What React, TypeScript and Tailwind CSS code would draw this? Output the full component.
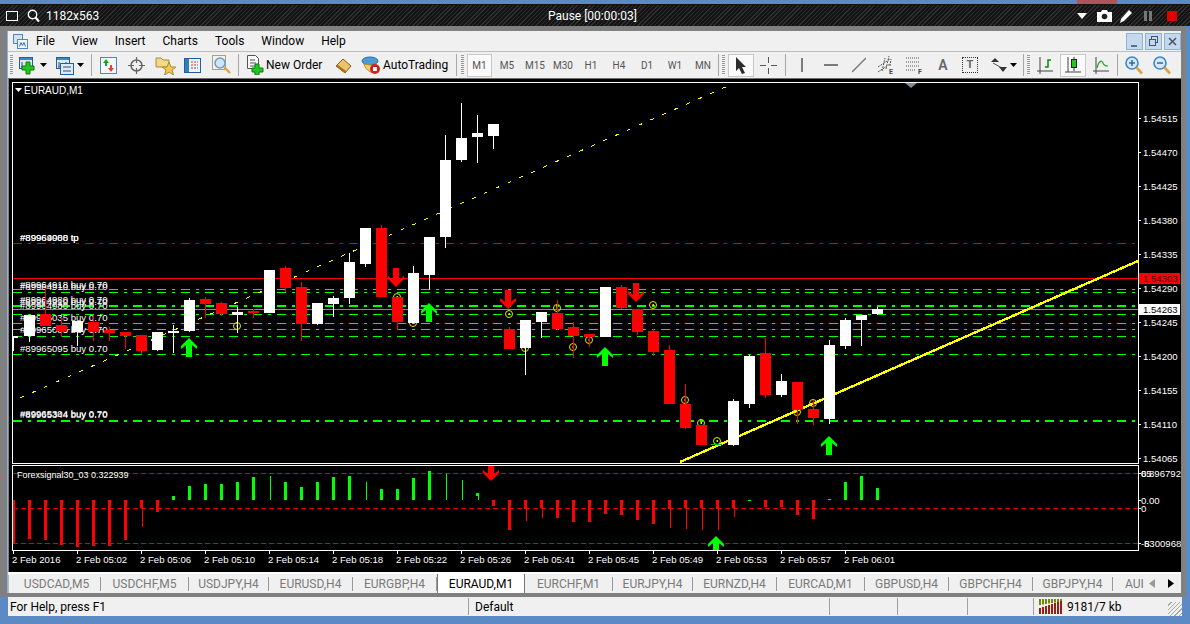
import React from "react";

// [x, bodyTop, bodyBottom, wickTop, wickBottom]
const whiteCandles = [
  [29, 315, 336, 315, 342], [77, 321, 332, 321, 346], [157, 332, 350, 332, 351], [173, 331, 333, 325, 353],
  [189, 300, 331, 298, 332], [237, 312, 315, 307, 333], [269, 270, 313, 270, 313], [317, 303, 324, 303, 325],
  [333, 298, 304, 296, 317], [349, 262, 298, 253, 304], [365, 228, 264, 228, 267], [413, 273, 323, 266, 323],
  [429, 237, 275, 237, 290], [445, 160, 237, 135, 248], [461, 138, 160, 103, 162], [477, 133, 137, 115, 163],
  [493, 124, 136, 124, 149], [525, 320, 348, 320, 375], [541, 312, 322, 312, 338], [605, 287, 337, 287, 337],
  [733, 401, 445, 399, 446], [749, 356, 404, 355, 408], [781, 381, 395, 374, 397], [829, 345, 419, 340, 424],
  [845, 320, 346, 318, 349], [861, 315, 320, 315, 346], [877, 309, 314, 307, 315],
];
const redCandles = [
  [45, 314, 326, 288, 326], [61, 325, 331, 317, 337], [93, 322, 332, 315, 341], [109, 330, 333, 327, 341],
  [125, 332, 336, 332, 349], [141, 335, 351, 335, 354], [205, 299, 304, 297, 318], [221, 303, 314, 302, 316],
  [253, 311, 313, 309, 318], [285, 268, 288, 266, 292], [301, 287, 324, 282, 341], [381, 228, 297, 225, 297],
  [397, 297, 322, 297, 330], [509, 329, 349, 327, 349], [557, 313, 329, 300, 330], [573, 327, 336, 322, 358],
  [589, 334, 337, 334, 347], [621, 287, 308, 285, 309], [637, 309, 332, 309, 335], [653, 331, 352, 329, 356],
  [669, 350, 404, 345, 404], [685, 404, 428, 384, 429], [701, 425, 445, 425, 445], [765, 353, 395, 338, 398],
  [797, 382, 410, 382, 424], [813, 409, 418, 400, 425],
];
const circles = [[237, 326], [397, 297], [413, 323], [509, 314], [525, 348], [557, 308], [573, 347], [589, 340], [653, 305], [685, 400], [701, 423], [717, 441], [797, 412], [813, 403]];
const greenDashed = [289, 292, 305, 306, 314, 323, 329, 336, 354, 420, 421];
const priceLabels: [number, string][] = [[118, "1.54515"], [152, "1.54470"], [186, "1.54425"], [220, "1.54380"], [254, "1.54335"], [288, "1.54290"], [322, "1.54245"], [356, "1.54200"], [390, "1.54155"], [424, "1.54110"], [458, "1.54065"]];
const timeLabels = ["2 Feb 2016", "2 Feb 05:02", "2 Feb 05:06", "2 Feb 05:10", "2 Feb 05:14", "2 Feb 05:18", "2 Feb 05:22", "2 Feb 05:26", "2 Feb 05:41", "2 Feb 05:45", "2 Feb 05:49", "2 Feb 05:53", "2 Feb 05:57", "2 Feb 06:01"];
const orderLabels: [number, string][] = [
  [241, "#89969088 tp"], [241, "#89964900 tp"], [288, "#89964918 buy 0.70"], [290, "#89964910 buy 0.70"],
  [303, "#89964980 buy 0.70"], [305, "#89964910 buy 0.70"], [309, "#89964980 buy 0.70"], [321, "#89965035 buy 0.70"],
  [333, "#89965085 buy 0.70"], [352, "#89965095 buy 0.70"], [417, "#89965304 buy 0.70"], [418, "#89965344 buy 0.70"],
];
// [x, end y, thin end y or 0]
const redBars = [
  [13, 543, 0], [29, 539, 0], [45, 540, 0], [61, 545, 0], [77, 547, 0], [93, 546, 0], [109, 546, 0], [125, 540, 0],
  [141, 508, 527], [157, 512, 0], [493, 506, 0], [509, 530, 0], [525, 509, 521], [541, 508, 518], [557, 518, 0],
  [573, 522, 0], [589, 522, 0], [605, 514, 0], [621, 515, 0], [637, 520, 0], [653, 524, 0], [669, 509, 528],
  [685, 508, 529], [701, 508, 530], [717, 509, 530], [733, 508, 517], [765, 507, 0], [781, 507, 0], [797, 515, 0], [813, 519, 0],
];
// [x, top y, thin]
const greenBars = [
  [173, 496, 0], [189, 486, 0], [205, 484, 0], [221, 484, 0], [237, 482, 0], [253, 477, 0], [269, 476, 1], [285, 482, 0],
  [301, 487, 0], [317, 482, 0], [333, 477, 0], [349, 476, 0], [365, 482, 1], [381, 489, 0], [397, 489, 0], [413, 478, 0],
  [429, 471, 0], [445, 474, 1], [461, 480, 1], [845, 482, 0], [861, 476, 0], [877, 488, 0],
];

const tabs = [
  { name: "USDCAD,M5", w: "w-[91px] pl-[3px]" }, { name: "USDCHF,M5", w: "w-[88px]" }, { name: "USDJPY,H4", w: "w-[80px]" },
  { name: "EURUSD,H4", w: "w-[84px]" }, { name: "EURGBP,H4", w: "w-[84px]" }, { name: "EURAUD,M1", w: "w-[88px]", active: true },
  { name: "EURCHF,M1", w: "w-[88px]" }, { name: "EURJPY,H4", w: "w-[80px]" }, { name: "EURNZD,H4", w: "w-[84px]" },
  { name: "EURCAD,M1", w: "w-[88px]" }, { name: "GBPUSD,H4", w: "w-[84px]" }, { name: "GBPCHF,H4", w: "w-[84px]" },
  { name: "GBPJPY,H4", w: "w-[80px]" },
];

function UpArrow({ x, y }: { x: number; y: number }) {
  return <polygon fill="#00ff00" transform={`translate(${x} ${y})`} points="0,0 8,8 8,11 3,7 3,19 -3,19 -3,7 -8,11 -8,8" />;
}
function DownArrow({ x, y }: { x: number; y: number }) {
  return <polygon fill="#ff0000" transform={`translate(${x} ${y})`} points="0,0 8,-8 8,-11 3,-7 3,-19 -3,-19 -3,-7 -8,-11 -8,-8" />;
}

function Chart() {
  return (
    <svg viewBox="9 79 1172 493" className="ml-px w-[1172px] h-[493px] block bg-black font-['Liberation_Sans',sans-serif] text-[9.6px]">
      <defs>
        <clipPath id="main"><rect x="13" y="83" width="1125" height="380" /></clipPath>
        <clipPath id="ind"><rect x="13" y="466" width="1125" height="84" /></clipPath>
      </defs>
      <g clipPath="url(#main)">
        <g shapeRendering="crispEdges">
          <line x1="13" x2="1138" y1="243.5" y2="243.5" stroke="#e00000" strokeDasharray="9 6 3 6" />
          {greenDashed.map((y) => (
            <line key={y} x1="13" x2="1138" y1={y + 0.5} y2={y + 0.5} stroke="#00ff00" strokeDasharray="9 6 3 6" />
          ))}
          <line x1="13" x2="1138" y1="278.5" y2="278.5" stroke="#ff0000" />
          <line x1="13" x2="1138" y1="309.5" y2="309.5" stroke="#8a8a8a" />
          <line x1="20" y1="398" x2="730" y2="85" stroke="#ffff00" strokeDasharray="4 9" />
          <line x1="680" y1="462" x2="1138" y2="261" stroke="#ffff00" strokeWidth="2.4" />
        </g>
        {circles.map(([x, y]) => (
          <g key={x}>
            <circle cx={x} cy={y} r="3.5" fill="none" stroke="#e8e800" />
            <rect x={x - 0.5} y={y - 1} width="1.5" height="2" fill="#e8e800" />
          </g>
        ))}
        <rect x="711" y="444" width="11" height="1" fill="#00c000" />
        {orderLabels.map(([y, t], i) => (
          <text key={i} x="20" y={y} fill="#fff">{t}</text>
        ))}
        <g shapeRendering="crispEdges">
          <rect x="13" y="336" width="5" height="2" fill="#fff" />
          <rect x="13" y="336" width="1" height="15" fill="#fff" />
          {whiteCandles.map(([x, t, b, wt, wb]) => (
            <g key={x} fill="#fff">
              <rect x={x} y={wt} width="1" height={wb - wt} />
              <rect x={x - 5} y={t} width="11" height={b - t} />
            </g>
          ))}
          {redCandles.map(([x, t, b, wt, wb]) => (
            <g key={x} fill="#ff0000">
              <rect x={x} y={wt} width="1" height={wb - wt} />
              <rect x={x - 5} y={t} width="11" height={b - t} />
            </g>
          ))}
        </g>
        <DownArrow x={396} y={287} />
        <DownArrow x={508} y={309} />
        <DownArrow x={636} y={302} />
        <UpArrow x={189} y={338} />
        <UpArrow x={429} y={303} />
        <UpArrow x={605} y={347} />
        <UpArrow x={829} y={436} />
      </g>

      <polygon points="905,83 917,83 911,88" fill="#7b8a9c" />
      <polygon points="15,88 22,88 18.5,92" fill="#fff" />
      <text x="24" y="94" fill="#fff" fontSize="10">EURAUD,M1</text>
      <rect x="12.5" y="82.5" width="1125.5" height="381" fill="none" stroke="#fff" shapeRendering="crispEdges" />

      <g clipPath="url(#ind)">
        <g shapeRendering="crispEdges">
          {[473, 508, 543].map((y) => (
            <line key={y} x1="13" x2="1138" y1={y + 0.5} y2={y + 0.5} stroke="#e00000" strokeDasharray="5 3" />
          ))}
          {redBars.map(([x, end, thin]) => (
            <g key={x} fill="#ff0000">
              <rect x={x - 1} y="500" width="3" height={end - 500} />
              {thin > 0 && <rect x={x + 1} y="500" width="1" height={thin - 500} />}
            </g>
          ))}
          {greenBars.map(([x, top, thin]) => (
            <rect key={x} x={thin ? x + 1 : x - 1} y={top} width={thin ? 1 : 3} height={500 - top} fill="#00ff00" />
          ))}
          <rect x="476" y="493" width="3" height="3" fill="#00ff00" />
          <rect x="478" y="493" width="1" height="7" fill="#00ff00" />
          <rect x="748" y="500" width="3" height="1" fill="#00ff00" />
          <rect x="828" y="499" width="3" height="1" fill="#00ff00" />
        </g>
        <DownArrow x={491} y={481} />
        <UpArrow x={716} y={536} />
      </g>
      <text x="17" y="478" fill="#fff" fontSize="9">Forexsignal30_03 0.322939</text>
      <rect x="12.5" y="465.5" width="1125.5" height="85" fill="none" stroke="#fff" shapeRendering="crispEdges" />

      {priceLabels.map(([y, t]) => (
        <g key={t}>
          <rect x="1138" y={y} width="3" height="1" fill="#fff" />
          <text x="1143" y={y + 4} fill="#fff">{t}</text>
        </g>
      ))}
      <rect x="1139" y="273" width="41" height="11" fill="#ff0000" />
      <text x="1143" y="282" fill="#400000">1.54303</text>
      <rect x="1139" y="304" width="41" height="11" fill="#fff" />
      <text x="1143" y="313" fill="#000">1.54263</text>

      {[473, 500, 508, 543].map((y) => (
        <rect key={y} x="1138" y={y} width="3" height="1" fill="#fff" />
      ))}
      <text x="1141" y="477" fill="#fff">65</text>
      <text x="1141" y="477" fill="#fff">0.896792</text>
      <text x="1141" y="504" fill="#fff">0.00</text>
      <text x="1141" y="512" fill="#fff">0</text>
      <text x="1141" y="547" fill="#fff">-8</text>
      <text x="1144" y="547" fill="#fff">5300968</text>

      {timeLabels.map((t, i) => (
        <g key={t}>
          <rect x={13 + 64 * i} y="550" width="1" height="4" fill="#fff" />
          <text x={12 + 64 * i} y="563" fill="#fff">{t}</text>
        </g>
      ))}
    </svg>
  );
}

function Grip() {
  return <div className="w-[3px] h-[20px] bg-[repeating-linear-gradient(180deg,#9a9a9a_0px,#9a9a9a_1px,#f0f0f0_1px,#f0f0f0_2px)]" />;
}
function Sep({ className }: { className: string }) {
  return <div className={`w-px h-[22px] bg-[#a8a8a8] ${className}`} />;
}
function Tri({ className }: { className: string }) {
  return (
    <svg width="7" height="4" viewBox="0 0 7 4" className={className}>
      <polygon points="0,0 7,0 3.5,4" fill="#000" />
    </svg>
  );
}
function MiniWindow() {
  return (
    <>
      <rect x="0.5" y="1.5" width="13" height="11" fill="#dce9f8" stroke="#1f5f9e" />
      <rect x="1" y="2" width="12" height="2" fill="#3f87c8" />
      <path d="M3 6v5M2 11h6M10 6v4" stroke="#33506e" fill="none" />
    </>
  );
}
function Plus() {
  return <path d="M7 6h4v4h4v4h-4v4H7v-4H3v-4h4z" fill="#22c822" stroke="#0a7a0a" />;
}

export default function App() {
  const tb = "h-[26px] flex items-center shrink-0";
  return (
    <div className="w-[1190px] h-[624px] flex flex-col overflow-hidden bg-[#5b8ac4] font-['Roboto',sans-serif]">
      <div className="h-[4px] flex justify-end pr-[73px]">
        <div className="w-[40px] bg-[#b0545c]" />
      </div>
      {/* recorder bar */}
      <div className="h-[22px] flex items-center border-t border-[#111] text-white text-[12px] bg-[repeating-linear-gradient(135deg,#2e2e2e_0px,#2e2e2e_1px,#141414_1px,#141414_3px)]">
        <div className="ml-[6px] w-[12px] h-[10px] border border-white" />
        <svg width="13" height="14" viewBox="0 0 13 14" className="ml-[9px]">
          <circle cx="5.5" cy="5.5" r="4.2" fill="none" stroke="#fff" strokeWidth="1.4" />
          <path d="M8.5 8.5l3.5 4" stroke="#fff" strokeWidth="2" />
        </svg>
        <span className="ml-[6px] w-[502px]">1182x563</span>
        <span className="w-[100px]">Pause [00:00:03]</span>
        <svg width="10" height="6" viewBox="0 0 10 6" className="ml-[429px]">
          <polygon points="0,0 10,0 5,6" fill="#fff" />
        </svg>
        <svg width="15" height="12" viewBox="0 0 15 12" className="ml-[10px]">
          <path d="M0 2h4l1-2h5l1 2h4v10H0z" fill="#fff" />
          <circle cx="7.5" cy="6.5" r="2.8" fill="#222" />
        </svg>
        <svg width="13" height="14" viewBox="0 0 13 14" className="ml-[8px]">
          <path d="M0 14l1-4 8-9 3 3-8 8z" fill="#fff" />
        </svg>
        <div className="ml-[11px] w-[8px] h-[10px] flex justify-between">
          <div className="w-[3px] bg-[#777]" />
          <div className="w-[3px] bg-[#777]" />
        </div>
        <div className="ml-[15px] w-[10px] h-[10px] bg-[#e00000]" />
      </div>

      {/* terminal window */}
      <div className="w-[1186px] h-[567px] bg-[#808080] pt-[5px] pl-[7px] pr-[5px] flex flex-col">
        <div className="flex-1 flex flex-col border-l border-[#8fb2d6]">
          <div className="h-[21px] bg-[#f0f0f0] border-b border-[#bdbdbd] flex items-center text-[12px] text-black">
            <svg width="15" height="15" viewBox="0 0 15 15" className="ml-[5px]">
              <rect x="0.5" y="0.5" width="9" height="9" fill="#cfe2f6" stroke="#4f86c0" />
              <rect x="4.5" y="5.5" width="10" height="9" fill="#eef5fc" stroke="#4f86c0" />
              <path d="M6.5 12.5l1.5-4 1.5 3 1.5-3 1.5 4" stroke="#3a6ea5" fill="none" />
            </svg>
            <div className="ml-[8px] flex gap-[17px]">
              <span>File</span>
              <span>View</span>
              <span>Insert</span>
              <span>Charts</span>
              <span>Tools</span>
              <span>Window</span>
              <span>Help</span>
            </div>
            <div className="ml-auto flex gap-[2px]">
              {["M3 11h6", "", "M3 3l7 7M10 3l-7 7"].map((d, i) => (
                <div key={i} className="w-[17px] h-[17px] bg-[#c5d9ee] border border-[#8fb2d6] flex items-center justify-center">
                  <svg width="13" height="13" viewBox="0 0 13 13">
                    {d ? <path d={d} stroke="#44566a" strokeWidth="1.6" fill="none" /> : (
                      <>
                        <rect x="4.5" y="1.5" width="6" height="6" fill="none" stroke="#44566a" />
                        <rect x="2.5" y="4.5" width="6" height="6" fill="#c5d9ee" stroke="#44566a" />
                      </>
                    )}
                  </svg>
                </div>
              ))}
            </div>
          </div>

          {/* toolbar */}
          <div className="h-[27px] bg-[#f0f0f0] border-b border-[#6e6e6e] flex items-start text-[12px] text-black">
            <div className={tb}>
              <div className="ml-[2px]"><Grip /></div>
              <svg width="18" height="19" viewBox="0 0 18 19" className="ml-[6px]"><MiniWindow /><Plus /></svg>
              <Tri className="ml-[3px]" />
              <svg width="18" height="19" viewBox="0 0 18 19" className="ml-[9px]">
                <MiniWindow />
                <rect x="4.5" y="7.5" width="13" height="11" fill="#dce9f8" stroke="#1f5f9e" />
                <path d="M7 11h8M7 15h8" stroke="#33506e" />
              </svg>
              <Tri className="ml-[3px]" />
              <Sep className="ml-[7px]" />
              <svg width="17" height="17" viewBox="0 0 17 17" className="ml-[8px]">
                <rect x="0.5" y="0.5" width="16" height="16" fill="#f4f7fb" stroke="#4f86c0" />
                <path d="M6 2l3 4H7v3H5V6H3z" fill="#1fa01f" />
                <path d="M11 15l-3-4h2V8h2v3h2z" fill="#e0452a" />
              </svg>
              <svg width="17" height="17" viewBox="0 0 17 17" className="ml-[11px]">
                <circle cx="8.5" cy="8.5" r="5.5" fill="none" stroke="#666" strokeWidth="1.5" />
                <path d="M8.5 0v6M8.5 11v6M0 8.5h6M11 8.5h6" stroke="#666" strokeWidth="1.2" />
              </svg>
              <svg width="21" height="20" viewBox="0 0 21 20" className="ml-[10px]">
                <path d="M1 3h5l2 2h6v7H1z" fill="#f4d98a" stroke="#a98a3a" />
                <polygon points="14,7 16,12 21,12 17,15 18.5,20 14,17 9.5,20 11,15 7,12 12,12" fill="#f2c94c" stroke="#a98a3a" />
              </svg>
              <svg width="17" height="17" viewBox="0 0 17 17" className="ml-[8px]">
                <rect x="0.5" y="1.5" width="16" height="14" fill="#eef4fb" stroke="#1f5f9e" />
                <rect x="1" y="2" width="4" height="13" fill="#2f7fc4" />
                <path d="M7 5h7M7 8h7M7 11h7" stroke="#c0392b" strokeDasharray="2 1" />
              </svg>
              <svg width="19" height="20" viewBox="0 0 19 20" className="ml-[11px]">
                <rect x="0.5" y="0.5" width="13" height="14" fill="#f4f1e6" stroke="#a8a090" />
                <circle cx="8" cy="8" r="5" fill="#cfe4f7" stroke="#6f9cc6" strokeWidth="1.5" />
                <path d="M12 12l6 6" stroke="#d9a441" strokeWidth="2.4" />
              </svg>
              <Sep className="ml-[7px]" />
              <svg width="17" height="20" viewBox="0 0 17 20" className="ml-[8px]">
                <path d="M0.5 0.5h8l3 3v10h-11z" fill="#f8f8f8" stroke="#555" />
                <path d="M3 5h5M3 8h6M3 11h5" stroke="#555" />
                <path d="M8 9h4v4h4v4h-4v3H8v-3H5v-4h3z" fill="#22c822" stroke="#0a7a0a" />
              </svg>
              <span className="ml-[2px] w-[69px]">New Order</span>
              <svg width="17" height="17" viewBox="0 0 17 17">
                <path d="M1 9l7-7 8 7-6 7z" fill="#e9c46a" stroke="#8a5a14" />
                <path d="M1 9l9 7 1-2-8-6z" fill="#a9701f" />
              </svg>
              <svg width="20" height="20" viewBox="0 0 20 20" className="ml-[9px]">
                <ellipse cx="9" cy="6" rx="8" ry="4" fill="#4c9bd6" stroke="#2a6ea5" />
                <path d="M3 9c2 7 8 9 11 9l2-7z" fill="#f2d16b" stroke="#b08a2e" />
                <circle cx="14" cy="14" r="5" fill="#d81f1f" />
                <rect x="12" y="12" width="4" height="4" fill="#fff" />
              </svg>
              <span className="ml-[2px] w-[73px]">AutoTrading</span>
              <Sep className="" />
              <div className="ml-[4px]"><Grip /></div>
            </div>
            <div className="h-[26px] flex items-center shrink-0 ml-[3px] text-[10px] text-[#555]">
              <div className="w-[25px] h-[23px] bg-[#fafafa] border border-[#c8c8c8] flex items-center justify-center">M1</div>
              <div className="w-[1px]" />
              {["M5", "M15", "M30", "H1", "H4", "D1", "W1", "MN"].map((t) => (
                <div key={t} className="w-[28px] text-center">{t}</div>
              ))}
              <Sep className="ml-[1px]" />
            </div>
            <div className={tb}>
              <div className="ml-[3px]"><Grip /></div>
              <div className="ml-[3px] w-[26px] h-[23px] bg-[#fafafa] border border-[#c8c8c8] flex items-center justify-center">
                <svg width="11" height="17" viewBox="0 0 11 17">
                  <path d="M0 0l10 10H6l3 6-3 1-3-6-3 3z" fill="#2b2b2b" />
                </svg>
              </div>
              <svg width="17" height="17" viewBox="0 0 17 17" className="ml-[6px]">
                <path d="M8.5 0v6M8.5 11v6M0 8.5h6M11 8.5h6" stroke="#555" />
              </svg>
              <Sep className="ml-[8px]" />
              <svg width="14" height="16" viewBox="0 0 14 16" className="ml-[9px]"><path d="M7 1v14" stroke="#555" strokeWidth="1.5" /></svg>
              <svg width="14" height="16" viewBox="0 0 14 16" className="ml-[15px]"><path d="M0 8h14" stroke="#555" strokeWidth="1.5" /></svg>
              <svg width="14" height="16" viewBox="0 0 14 16" className="ml-[14px]"><path d="M0 15L14 1" stroke="#777" strokeWidth="1.5" /></svg>
              <svg width="18" height="20" viewBox="0 0 18 20" className="ml-[11px]">
                <path d="M1 12l12-8M1 17l12-8M5 16l3-13M9 14l3-13M13 11l1-7" stroke="#555" fill="none" strokeDasharray="2 1" />
                <text x="12" y="19" fontSize="7" fontWeight="700" fill="#444">E</text>
              </svg>
              <svg width="18" height="20" viewBox="0 0 18 20" className="ml-[11px]">
                <path d="M0 3h14M0 7h14M0 11h14M0 15h10" stroke="#555" strokeDasharray="1 1" />
                <text x="12" y="19" fontSize="7" fontWeight="700" fill="#444">F</text>
              </svg>
              <span className="ml-[11px] w-[16px] text-center text-[14px] font-semibold text-[#666]">A</span>
              <div className="ml-[11px] w-[16px] h-[16px] border border-dotted border-[#333] text-[11px] font-bold text-[#666] flex items-center justify-center">T</div>
              <svg width="17" height="16" viewBox="0 0 17 16" className="ml-[13px]">
                <polygon points="4,1 8,5 0,5" fill="#333" />
                <path d="M2 6l9 5" stroke="#555" />
                <polygon points="12,15 8,10 16,10" fill="#333" />
              </svg>
              <Tri className="ml-[2px]" />
              <Sep className="ml-[6px]" />
              <div className="ml-[3px]"><Grip /></div>
              <svg width="16" height="17" viewBox="0 0 16 17" className="ml-[7px]">
                <path d="M3 0v14h13M0 14h3M3 14v3" stroke="#444" fill="none" />
                <path d="M8 10h3V3h3" stroke="#0a8a0a" strokeWidth="1.5" fill="none" />
              </svg>
              <div className="ml-[7px] w-[26px] h-[23px] bg-[#fafafa] border border-[#c8c8c8] flex items-center justify-center">
                <svg width="16" height="18" viewBox="0 0 16 18">
                  <path d="M3 1v15h13M0 16h3" stroke="#444" fill="none" />
                  <path d="M9 1v14" stroke="#333" />
                  <rect x="6.5" y="3.5" width="5" height="8" fill="#22c822" stroke="#222" />
                </svg>
              </div>
              <svg width="16" height="17" viewBox="0 0 16 17" className="ml-[7px]">
                <path d="M3 0v14h13M0 14h3M3 14v3" stroke="#444" fill="none" />
                <path d="M4 11c2-8 5-8 6-5s3 3 5 3" stroke="#2aa02a" fill="none" strokeWidth="1.2" />
              </svg>
              <Sep className="ml-[8px]" />
              <svg width="18" height="19" viewBox="0 0 18 19" className="ml-[7px]">
                <circle cx="7" cy="7" r="6" fill="#d4e8fa" stroke="#3e86c6" strokeWidth="1.6" />
                <path d="M4 7h6M7 4v6" stroke="#2b6aa8" strokeWidth="1.5" />
                <path d="M11.5 11.5l5.5 6" stroke="#d9a441" strokeWidth="2.6" />
              </svg>
              <svg width="18" height="19" viewBox="0 0 18 19" className="ml-[10px]">
                <circle cx="7" cy="7" r="6" fill="#d4e8fa" stroke="#3e86c6" strokeWidth="1.6" />
                <path d="M4 7h6" stroke="#2b6aa8" strokeWidth="1.5" />
                <path d="M11.5 11.5l5.5 6" stroke="#d9a441" strokeWidth="2.6" />
              </svg>
            </div>
          </div>

          <Chart />

          {/* symbol tabs */}
          <div className="h-[21px] bg-[#f0f0f0] border-t-2 border-white flex items-center text-[12px] text-[#7a7a7a]">
            <div className="w-[2px] h-[18px] border-l border-[#b8b8b8]" />
            {tabs.map((t) =>
              t.active ? (
                <div key={t.name} className={`${t.w} h-[19px] bg-white text-black border-x border-[#777] flex items-center justify-center`}>{t.name}</div>
              ) : (
                <div key={t.name} className={`${t.w} h-[14px] border-r border-[#9a9a9a] flex items-center justify-center`}>{t.name}</div>
              ),
            )}
            <span className="ml-[12px] w-[22px] overflow-hidden">AUI</span>
            <svg width="6" height="9" viewBox="0 0 6 9" className="ml-[2px]"><polygon points="6,0 6,9 0,4.5" fill="#9a9a9a" /></svg>
            <svg width="6" height="9" viewBox="0 0 6 9" className="ml-[13px]"><polygon points="0,0 0,9 6,4.5" fill="#000" /></svg>
          </div>
        </div>
      </div>

      <div className="w-[1186px] h-[4px] bg-[#808080]" />

      {/* status bar */}
      <div className="ml-[8px] w-[1174px] h-[19px] bg-[#f0f0f0] flex items-center text-[12px] text-black">
        <span className="ml-[2px] w-[458px]">For Help, press F1</span>
        <div className="w-px h-[17px] bg-[#a0a0a0]" />
        <span className="ml-[6px] w-[354px]">Default</span>
        <div className="w-px h-[17px] bg-[#a0a0a0]" />
        <div className="ml-[67px] w-px h-[17px] bg-[#a0a0a0]" />
        <div className="ml-[69px] w-px h-[17px] bg-[#a0a0a0]" />
        <div className="ml-[65px] w-px h-[17px] bg-[#a0a0a0]" />
        <svg width="24" height="15" viewBox="0 0 24 15" className="ml-[5px]">
          {[0, 1, 2, 3, 4, 5, 6, 7].map((i) => (
            <g key={i}>
              <rect x={i * 3} y="0" width="2" height={6 - i * 0.5} fill="#6f8a00" />
              <rect x={i * 3} y={9 - i} width="2" height={6 + i} fill="#9a1f10" />
            </g>
          ))}
        </svg>
        <span className="ml-[4px]">9181/7 kb</span>
        <div className="ml-auto self-end w-[14px] h-[14px] bg-[repeating-linear-gradient(135deg,#f0f0f0_0px,#f0f0f0_2px,#a8a8a8_2px,#a8a8a8_3px)]" />
      </div>
    </div>
  );
}
